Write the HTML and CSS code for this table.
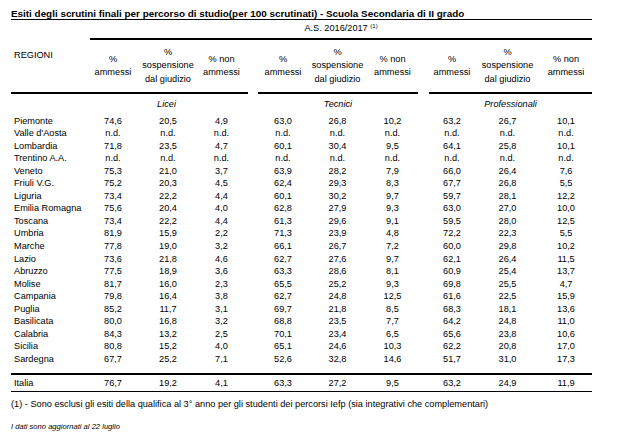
FILE: index.html
```html
<!DOCTYPE html>
<html lang="it">
<head>
<meta charset="utf-8">
<link rel="stylesheet" href="styles.css">
</head>
<body>
<div class="page">
  <div class="title">Esiti degli scrutini finali per percorso di studio(per 100 scrutinati) - Scuola Secondaria di II grado</div>
  <table class="grid">
    <colgroup>
      <col class="c-reg"><col class="c-l1"><col class="c-l2"><col class="c-l3"><col class="c-gap1">
      <col class="c-t1"><col class="c-t2"><col class="c-t3"><col class="c-gap2">
      <col class="c-p1"><col class="c-p2"><col class="c-p3">
    </colgroup>
    <tr class="as-row">
      <td></td>
      <td colspan="11"><div class="as">A.S. 2016/2017 <sup>(1)</sup></div></td>
    </tr>
    <tr class="head">
      <th class="reg">REGIONI</th>
      <th>%<br>ammessi</th><th>%<br>sospensione<br>dal giudizio</th><th>% non<br>ammessi</th>
      <th class="gap"></th>
      <th>%<br>ammessi</th><th>%<br>sospensione<br>dal giudizio</th><th>% non<br>ammessi</th>
      <th class="gap"></th>
      <th>%<br>ammessi</th><th>%<br>sospensione<br>dal giudizio</th><th>% non<br>ammessi</th>
    </tr>
    <tr class="group">
      <td></td><td colspan="3">Licei</td><td></td><td colspan="3">Tecnici</td><td></td><td colspan="3">Professionali</td>
    </tr>
    <tr class="data"><td class="reg">Piemonte</td><td>74,6</td><td>20,5</td><td>4,9</td><td></td><td>63,0</td><td>26,8</td><td>10,2</td><td></td><td>63,2</td><td>26,7</td><td>10,1</td></tr>
    <tr class="data"><td class="reg">Valle d'Aosta</td><td>n.d.</td><td>n.d.</td><td>n.d.</td><td></td><td>n.d.</td><td>n.d.</td><td>n.d.</td><td></td><td>n.d.</td><td>n.d.</td><td>n.d.</td></tr>
    <tr class="data"><td class="reg">Lombardia</td><td>71,8</td><td>23,5</td><td>4,7</td><td></td><td>60,1</td><td>30,4</td><td>9,5</td><td></td><td>64,1</td><td>25,8</td><td>10,1</td></tr>
    <tr class="data"><td class="reg">Trentino A.A.</td><td>n.d.</td><td>n.d.</td><td>n.d.</td><td></td><td>n.d.</td><td>n.d.</td><td>n.d.</td><td></td><td>n.d.</td><td>n.d.</td><td>n.d.</td></tr>
    <tr class="data"><td class="reg">Veneto</td><td>75,3</td><td>21,0</td><td>3,7</td><td></td><td>63,9</td><td>28,2</td><td>7,9</td><td></td><td>66,0</td><td>26,4</td><td>7,6</td></tr>
    <tr class="data"><td class="reg">Friuli V.G.</td><td>75,2</td><td>20,3</td><td>4,5</td><td></td><td>62,4</td><td>29,3</td><td>8,3</td><td></td><td>67,7</td><td>26,8</td><td>5,5</td></tr>
    <tr class="data"><td class="reg">Liguria</td><td>73,4</td><td>22,2</td><td>4,4</td><td></td><td>60,1</td><td>30,2</td><td>9,7</td><td></td><td>59,7</td><td>28,1</td><td>12,2</td></tr>
    <tr class="data"><td class="reg">Emilia Romagna</td><td>75,6</td><td>20,4</td><td>4,0</td><td></td><td>62,8</td><td>27,9</td><td>9,3</td><td></td><td>63,0</td><td>27,0</td><td>10,0</td></tr>
    <tr class="data"><td class="reg">Toscana</td><td>73,4</td><td>22,2</td><td>4,4</td><td></td><td>61,3</td><td>29,6</td><td>9,1</td><td></td><td>59,5</td><td>28,0</td><td>12,5</td></tr>
    <tr class="data"><td class="reg">Umbria</td><td>81,9</td><td>15,9</td><td>2,2</td><td></td><td>71,3</td><td>23,9</td><td>4,8</td><td></td><td>72,2</td><td>22,3</td><td>5,5</td></tr>
    <tr class="data"><td class="reg">Marche</td><td>77,8</td><td>19,0</td><td>3,2</td><td></td><td>66,1</td><td>26,7</td><td>7,2</td><td></td><td>60,0</td><td>29,8</td><td>10,2</td></tr>
    <tr class="data"><td class="reg">Lazio</td><td>73,6</td><td>21,8</td><td>4,6</td><td></td><td>62,7</td><td>27,6</td><td>9,7</td><td></td><td>62,1</td><td>26,4</td><td>11,5</td></tr>
    <tr class="data"><td class="reg">Abruzzo</td><td>77,5</td><td>18,9</td><td>3,6</td><td></td><td>63,3</td><td>28,6</td><td>8,1</td><td></td><td>60,9</td><td>25,4</td><td>13,7</td></tr>
    <tr class="data"><td class="reg">Molise</td><td>81,7</td><td>16,0</td><td>2,3</td><td></td><td>65,5</td><td>25,2</td><td>9,3</td><td></td><td>69,8</td><td>25,5</td><td>4,7</td></tr>
    <tr class="data"><td class="reg">Campania</td><td>79,8</td><td>16,4</td><td>3,8</td><td></td><td>62,7</td><td>24,8</td><td>12,5</td><td></td><td>61,6</td><td>22,5</td><td>15,9</td></tr>
    <tr class="data"><td class="reg">Puglia</td><td>85,2</td><td>11,7</td><td>3,1</td><td></td><td>69,7</td><td>21,8</td><td>8,5</td><td></td><td>68,3</td><td>18,1</td><td>13,6</td></tr>
    <tr class="data"><td class="reg">Basilicata</td><td>80,0</td><td>16,8</td><td>3,2</td><td></td><td>68,8</td><td>23,5</td><td>7,7</td><td></td><td>64,2</td><td>24,8</td><td>11,0</td></tr>
    <tr class="data"><td class="reg">Calabria</td><td>84,3</td><td>13,2</td><td>2,5</td><td></td><td>70,1</td><td>23,4</td><td>6,5</td><td></td><td>65,6</td><td>23,8</td><td>10,6</td></tr>
    <tr class="data"><td class="reg">Sicilia</td><td>80,8</td><td>15,2</td><td>4,0</td><td></td><td>65,1</td><td>24,6</td><td>10,3</td><td></td><td>62,2</td><td>20,8</td><td>17,0</td></tr>
    <tr class="data"><td class="reg">Sardegna</td><td>67,7</td><td>25,2</td><td>7,1</td><td></td><td>52,6</td><td>32,8</td><td>14,6</td><td></td><td>51,7</td><td>31,0</td><td>17,3</td></tr>
    <tr class="spacer"><td colspan="12"></td></tr>
    <tr class="total"><td class="reg">Italia</td><td>76,7</td><td>19,2</td><td>4,1</td><td></td><td>63,3</td><td>27,2</td><td>9,5</td><td></td><td>63,2</td><td>24,9</td><td>11,9</td></tr>
  </table>
  <div class="note">(1) - Sono esclusi gli esiti della qualifica al 3° anno per gli studenti dei percorsi Iefp (sia integrativi che complementari)</div>
  <div class="update">I dati sono aggiornati al 22 luglio</div>
</div>
</body>
</html>
```
FILE: styles.css
```css
html, body {
  margin: 0;
  background: #fff;
}
body {
  font-family: "Liberation Sans", Arial, sans-serif;
  color: #000;
}
.page {
  padding: 9px 0 0 11px;
  width: 581px;
}
.title {
  font-weight: bold;
  font-size: 9.9px;
  line-height: 10px;
  border-bottom: 1px solid #000;
  white-space: nowrap;
}
.grid {
  border-collapse: separate;
  border-spacing: 0;
  table-layout: fixed;
  width: 581px;
  font-size: 9.2px;
}
.grid td, .grid th {
  padding: 0;
  font-weight: normal;
  text-align: center;
  white-space: nowrap;
}
.c-reg { width: 74px; }
.c-l1 { width: 56px; }
.c-l2 { width: 54px; }
.c-l3 { width: 53px; }
.c-gap1 { width: 10px; }
.c-t1 { width: 50px; }
.c-t2 { width: 59px; }
.c-t3 { width: 51px; }
.c-gap2 { width: 11px; }
.c-p1 { width: 46px; }
.c-p2 { width: 65px; }
.c-p3 { width: 52px; }

.as {
  margin-left: 5px;
  height: 16px;
  padding-bottom: 2px;
  line-height: 16px;
  border-bottom: 2px solid #000;
  text-align: center;
}
.as sup {
  font-size: 6px;
  vertical-align: 3px;
  line-height: 0;
}
.head th {
  height: 52px;
  line-height: 13.5px;
  vertical-align: middle;
  border-bottom: 2px solid #000;
}
.head th.gap {
  border-bottom: none;
}
.head th.reg {
  vertical-align: top;
  text-align: left;
  padding: 9px 0 0 3px;
  line-height: 12px;
  height: 43px;
}
.group td {
  height: 20.5px;
  line-height: 12px;
  font-style: italic;
  vertical-align: middle;
}
.data td, .total td {
  height: 12.55px;
  line-height: 12.55px;
}
.grid td.reg {
  text-align: left;
  padding-left: 3px;
}
.spacer td {
  height: 7.5px;
}
.total td {
  height: 16px;
  line-height: 16px;
  border-top: 2px solid #000;
  border-bottom: 1px solid #000;
}
.note {
  margin-top: 6px;
  font-size: 9.2px;
  line-height: 12px;
  white-space: nowrap;
}
.update {
  margin-top: 12px;
  font-size: 7.6px;
  line-height: 10px;
  font-style: italic;
  white-space: nowrap;
}
```
